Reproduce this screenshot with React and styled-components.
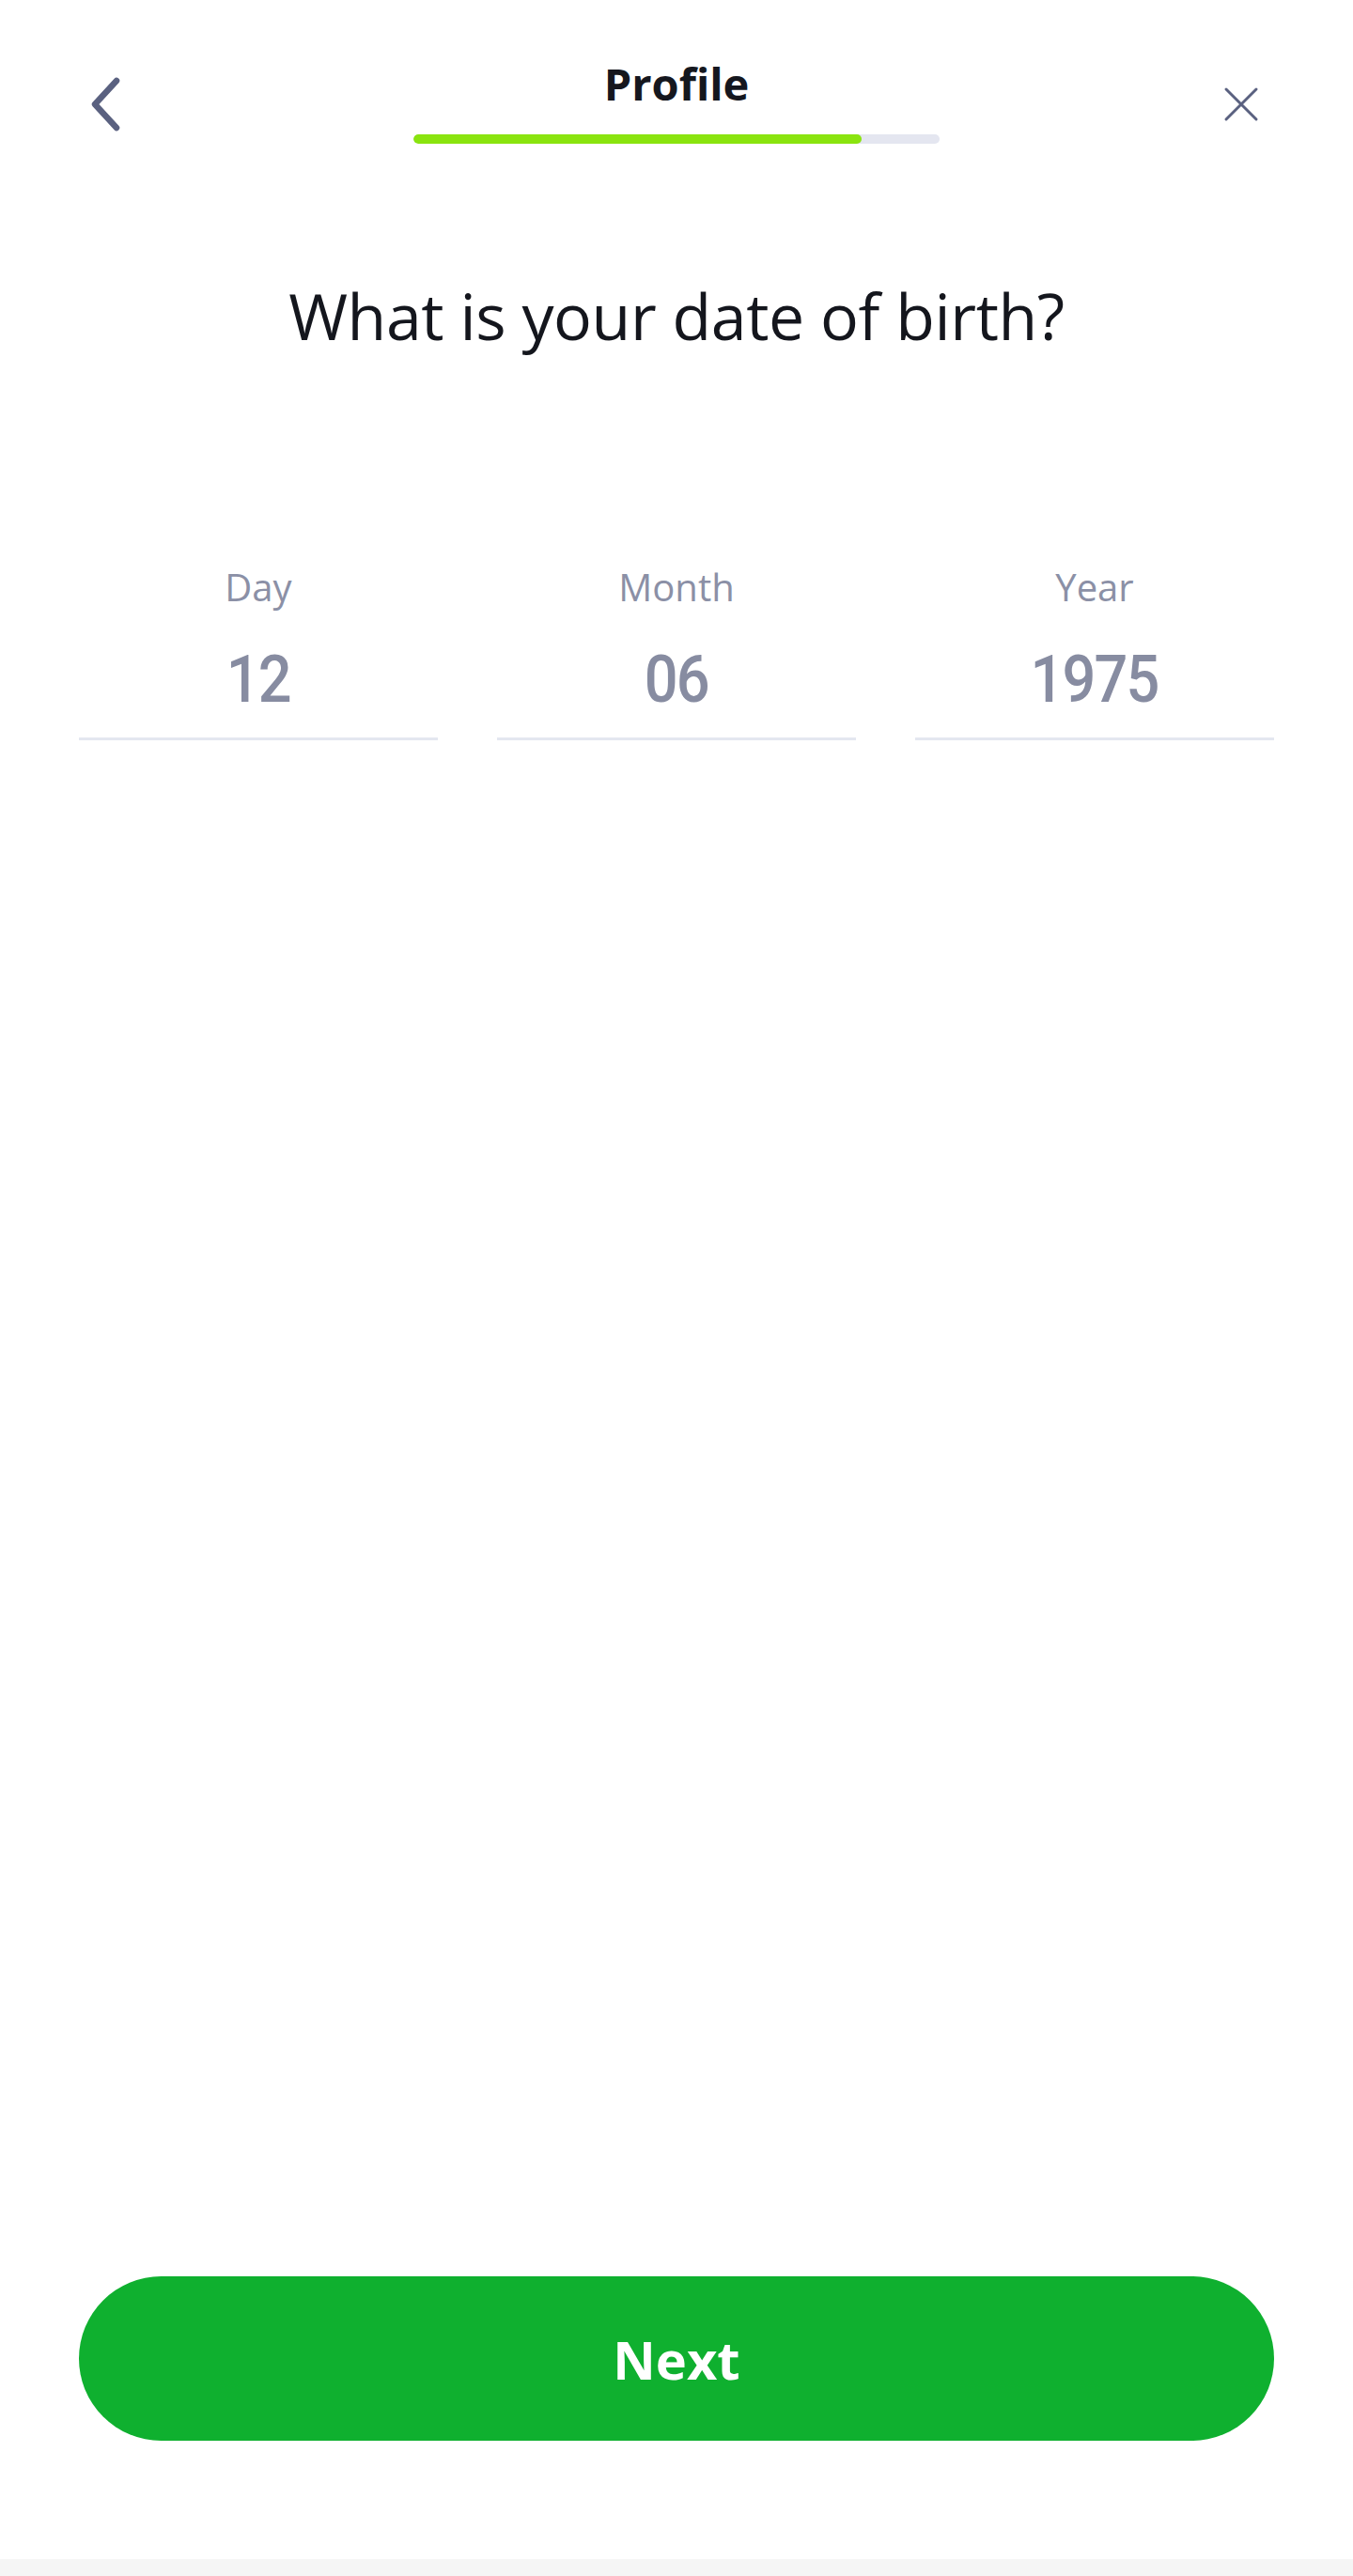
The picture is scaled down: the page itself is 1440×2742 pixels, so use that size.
import React from "react";
import styled, { createGlobalStyle } from "styled-components";

const Global = createGlobalStyle`
  html, body { margin: 0; padding: 0; background: #ffffff; }
  * { box-sizing: border-box; }
`;

const Page = styled.div`
  width: 1440px;
  height: 2742px;
  display: flex;
  flex-direction: column;
  background: #ffffff;
  font-family: "Open Sans", "Noto Sans", sans-serif;
`;

const Header = styled.header`
  display: grid;
  grid-template-columns: 1fr 560px 1fr;
  align-items: start;
  padding-top: 57px;
`;

const IconButton = styled.button`
  border: 0;
  background: none;
  padding: 0;
  display: block;
  cursor: pointer;
  justify-self: ${(p) => (p.$side === "right" ? "end" : "start")};
  margin-top: ${(p) => p.$top}px;
  margin-left: ${(p) => (p.$side === "left" ? "88px" : "0")};
  margin-right: ${(p) => (p.$side === "right" ? "94px" : "0")};
  svg { display: block; }
`;

const TitleBlock = styled.div`
  display: flex;
  flex-direction: column;
  align-items: center;
`;

const Title = styled.h1`
  margin: 0;
  font-size: 47px;
  line-height: 64px;
  font-weight: 700;
  color: #15171e;
`;

const Track = styled.div`
  margin-top: 22px;
  width: 560px;
  height: 10px;
  border-radius: 5px;
  background: #e4e6f0;
  overflow: hidden;
`;

const Fill = styled.div`
  height: 100%;
  border-radius: 5px;
  background: #8ae40f;
`;

const Question = styled.h2`
  margin: 136px 0 0;
  text-align: center;
  font-size: 68px;
  line-height: 93px;
  font-weight: 400;
  letter-spacing: -0.4px;
  color: #14161d;
`;

const Fields = styled.div`
  display: grid;
  grid-template-columns: repeat(3, 1fr);
  column-gap: 63px;
  padding: 0 84px;
  margin-top: 216px;
`;

const Field = styled.div`
  display: flex;
  flex-direction: column;
  align-items: center;
  padding-bottom: 21px;
  border-bottom: 3px solid #e4e7f0;
`;

const Label = styled.span`
  font-size: 40px;
  line-height: 54px;
  font-weight: 400;
  color: #8b90a6;
`;

const Value = styled.span`
  display: inline-block;
  margin-top: 30px;
  font-family: Roboto, "Noto Sans", sans-serif;
  font-size: 70px;
  line-height: 82px;
  font-weight: 500;
  letter-spacing: -2px;
  transform: scaleX(0.9);
  color: #878ca1;
`;

const Spacer = styled.div`
  flex: 1;
`;

const NextButton = styled.button`
  margin: 0 84px 126px;
  height: 175px;
  border: 0;
  border-radius: 88px;
  background: #0fb02f;
  color: #ffffff;
  font-family: "Open Sans", "Noto Sans", sans-serif;
  font-size: 56px;
  font-weight: 700;
  line-height: 76px;
  cursor: pointer;
`;

const BottomStrip = styled.div`
  height: 18px;
  background: #f5f5f5;
`;

const fields = [
  { label: "Day", value: "12" },
  { label: "Month", value: "06" },
  { label: "Year", value: "1975" },
];

export default function App() {
  const progress = 85.2;
  return (
    <>
      <Global />
      <Page>
        <Header>
          <IconButton $side="left" $top={21} aria-label="Back">
            <svg width="44" height="66" viewBox="0 0 44 66" fill="none">
              <path
                d="M36 8 L13 33 L36 58"
                stroke="#5a6180"
                strokeWidth="6.5"
                strokeLinecap="round"
                strokeLinejoin="round"
              />
            </svg>
          </IconButton>
          <TitleBlock>
            <Title>Profile</Title>
            <Track>
              <Fill style={{ width: `${progress}%` }} />
            </Track>
          </TitleBlock>
          <IconButton $side="right" $top={29} aria-label="Close">
            <svg width="50" height="50" viewBox="0 0 50 50" fill="none">
              <path
                d="M9 9 L41 41 M41 9 L9 41"
                stroke="#5a6180"
                strokeWidth="3"
                strokeLinecap="round"
              />
            </svg>
          </IconButton>
        </Header>
        <Question>What is your date of birth?</Question>
        <Fields>
          {fields.map((f) => (
            <Field key={f.label}>
              <Label>{f.label}</Label>
              <Value>{f.value}</Value>
            </Field>
          ))}
        </Fields>
        <Spacer />
        <NextButton>Next</NextButton>
        <BottomStrip />
      </Page>
    </>
  );
}
